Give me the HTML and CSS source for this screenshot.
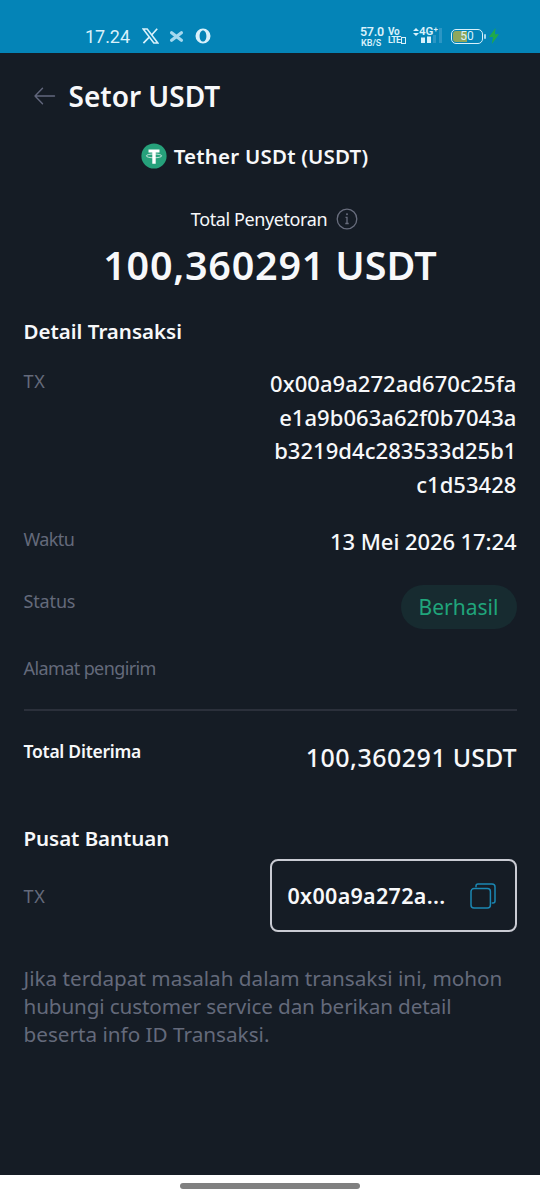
FILE: index.html
```html
<!DOCTYPE html>
<html lang="id">
<head>
<meta charset="utf-8">
<title>Setor USDT</title>
<link rel="stylesheet" href="styles.css">
</head>
<body>
<div class="statusbar">
  <span class="clock">17.24</span>
  <svg class="app-x" width="17" height="16" viewBox="0 0 17 16" fill="none" stroke="#d9f1fb"><path d="M1.2 1h4l10.6 14h-4z" stroke-width="1.6"/><path d="M15.2 .8 9.6 7M7 9.4 1.4 15.2" stroke-width="1.7"/></svg>
  <svg class="app-cross" width="15" height="13" viewBox="0 0 15 13" fill="none" stroke="#a5d8ee" stroke-linecap="round"><path d="M2.600 2.800 12.400 10.200M12.400 2.800 2.600 10.200" stroke-width="3.300"/></svg>
  <svg class="app-o" width="16" height="16" viewBox="0 0 16 16"><path fill="#d9f1fb" fill-rule="evenodd" d="M8 .5a7.500 7.500 0 1 0 0 15 7.500 7.500 0 0 0 0-15zM8 2.400c2 0 3.400 2.400 3.400 5.600S10 13.600 8 13.600 4.600 11.200 4.600 8 6 2.400 8 2.400z"/></svg>
  <div class="speed"><span class="speed-value">57.0</span><span class="speed-unit">KB/S</span></div>
  <div class="volte"><span>Vo</span><span class="lte">LTE<i class="sim"></i></span></div>
  <div class="signal">
    <div class="signal-top"><svg width="6" height="8" viewBox="0 0 6 8" fill="#d9f1fb"><path d="M3 0l3 3H0zM3 8l3-3H0z"/></svg><span>4G<sup>+</sup></span></div>
    <svg class="bars" width="22" height="15" viewBox="0 0 22 15"><path fill="#d9f1fb" d="M0 9.500h4V15H0zM6 8.500h4V15H6z"/><path fill="#2c96c4" d="M12 7h3v8h-3zM18 0h3v15h-3z"/></svg>
  </div>
  <div class="battery"><span>50</span></div>
  <i class="nub"></i>
  <svg class="bolt" width="10" height="16" viewBox="0 0 10 16" fill="#20a94b"><path d="M6.500 0 0 9h4L2.800 16 10 6.300H6z"/></svg>
</div>
<main class="page">
  <header class="header">
    <svg width="22" height="18" viewBox="0 0 22 18" fill="none" stroke="#62677d" stroke-width="1.400" stroke-linecap="round" stroke-linejoin="round"><path d="M20.500 9H1M8.500 1.200 1 9l7.500 7.800"/></svg>
    <h1>Setor USDT</h1>
  </header>
  <div class="token">
    <svg width="26" height="26" viewBox="0 0 26 26"><circle cx="13" cy="13" r="12.600" fill="#26a17b"/><path d="M7.500 6.500h11v3h-3.800v11.200h-3.400V9.500H7.500z" fill="#fff"/><ellipse cx="13" cy="12.900" rx="7.700" ry="1.900" fill="none" stroke="#fff" stroke-width=".7"/></svg>
    <span>Tether USDt (USDT)</span>
  </div>
  <div class="deposit">
    <span>Total Penyetoran</span>
    <svg width="22" height="22" viewBox="0 0 22 22" fill="none" stroke="#686d7d" stroke-width="1.300"><circle cx="11" cy="11" r="9.800"/><path d="M9.500 9.300H11v6M9.300 15.500h3.400"/><circle cx="11" cy="6.300" r=".4"/></svg>
  </div>
  <div class="amount"><span class="digits">100,360291</span> USDT</div>
  <h2 class="section">Detail Transaksi</h2>
  <div class="row row-hash">
    <span class="label label-tx">TX</span>
    <div class="value hash"><span>0x00a9a272ad670c25fa</span><span>e1a9b063a62f0b7043a</span><span>b3219d4c283533d25b1</span><span>c1d53428</span></div>
  </div>
  <div class="row row-time"><span class="label">Waktu</span><span class="value date">13 Mei 2026 17:24</span></div>
  <div class="row row-status"><span class="label label-status">Status</span><span class="pill">Berhasil</span></div>
  <div class="row row-sender"><span class="label">Alamat pengirim</span></div>
  <hr class="divider">
  <div class="row row-total"><span class="total-label">Total Diterima</span><span class="total-value"><span class="digits">100,360291</span> USDT</span></div>
  <h2 class="section section-help">Pusat Bantuan</h2>
  <div class="row row-copy">
    <span class="label label-tx">TX</span>
    <div class="copybox">
      <span>0x00a9a272a...</span>
      <svg width="26" height="26" viewBox="0 0 26 26" fill="none" stroke="#1b87b3" stroke-width="1.500" stroke-linecap="round"><rect x="1" y="5.600" width="19.400" height="19.400" rx="3"/><path d="M6 3.800V3a2 2 0 0 1 2-2h14a3 3 0 0 1 3 3v14a2 2 0 0 1-2 2h-.7"/></svg>
    </div>
  </div>
  <p class="note"><span class="wide">Jika terdapat masalah dalam transaksi ini, mohon</span><br><span class="tight">hubungi customer service dan berikan detail</span><br><span class="wide">beserta info ID Transaksi.</span></p>
</main>
<footer class="navbar"><i class="handle"></i></footer>
</body>
</html>
```
FILE: styles.css
```css
* { box-sizing: border-box; }
body { margin: 0; width: 540px; height: 1199px; overflow: hidden; display: flex; flex-direction: column; background: #151c25; color: #f7f8fa; font-family: "Noto Sans", sans-serif; white-space: nowrap; }
svg { display: block; flex: none; }
h1, h2, p { margin: 0; }
.statusbar { height: 53px; flex: none; padding: 20px 0 0 85px; display: flex; align-items: flex-start; background: #0484b7; color: #d9f1fb; font-family: Roboto, sans-serif; }
.clock { width: 57px; font-size: 18px; line-height: 34px; letter-spacing: -.05px; }
.app-x { margin-top: 8px; }
.app-cross { margin: 10px 0 0 10px; }
.app-o { margin: 8px 0 0 11px; }
.speed { width: 28px; margin: 5px 0 0 149px; display: flex; flex-direction: column; font-weight: 600; }
.speed-value { font-size: 12.500px; line-height: 13px; letter-spacing: -.3px; }
.speed-unit { font-size: 9px; line-height: 10px; padding-left: 1px; }
.volte { width: 25px; margin-top: 7px; display: flex; flex-direction: column; font-size: 10px; line-height: 9px; font-weight: 700; letter-spacing: -.4px; }
.lte { display: flex; align-items: center; font-size: 9px; line-height: 9px; letter-spacing: -.7px; }
.sim { width: 5px; height: 7px; margin-left: 1px; border: 1.500px solid #d9f1fb; }
.signal { position: relative; width: 38px; height: 25px; }
.signal-top { display: flex; align-items: center; margin-top: 7px; font-size: 11.500px; line-height: 9px; font-weight: 600; }
.signal-top sup { font-size: 8px; line-height: 0; vertical-align: 3px; }
.bars { position: absolute; left: 8px; top: 8px; }
.battery { width: 32px; height: 15px; margin-top: 9px; border: 1.500px solid #d9f1fb; border-radius: 5px; font-size: 12px; text-align: center; background: linear-gradient(90deg, #8fa75d 50%, #0484b7 50%) content-box; padding: 1px; }
.battery span { display: block; line-height: 11px; }
.nub { width: 2px; height: 5px; margin: 14px 3px 0 1px; background: #a5d8ee; border-radius: 1px; }
.bolt { margin-top: 8px; }
.page { flex: 1; display: flex; flex-direction: column; padding: 0 23.500px; }
.header { height: 85px; display: flex; align-items: center; padding-left: 10px; gap: 13px; }
.header h1 { font-size: 28px; font-weight: 600; line-height: 40px; }
.token { height: 36px; display: flex; align-items: center; justify-content: center; gap: 7px; padding-right: 31px; font-size: 20.500px; font-weight: 600; letter-spacing: .2px; }
.deposit { height: 32px; margin-top: 29px; display: flex; align-items: center; justify-content: center; gap: 9px; padding-left: 9px; font-size: 18px; letter-spacing: -.4px; }
.amount { height: 50px; margin-top: 6px; line-height: 49px; font-size: 39.500px; font-weight: 600; text-align: center; }
.amount .digits { letter-spacing: .75px; }
.section { margin-top: 25px; font-size: 20.500px; line-height: 30px; font-weight: 600; }
.row { display: flex; justify-content: space-between; align-items: flex-start; }
.label { color: #646a7b; font-size: 18px; line-height: 28px; letter-spacing: -.6px; }
.label-tx { letter-spacing: .8px; }
.value { font-size: 22px; font-weight: 500; line-height: 33.500px; text-align: right; }
.hash { display: flex; flex-direction: column; letter-spacing: .04px; }
.date { letter-spacing: -.08px; }
.row-hash { margin-top: 21px; height: 134px; }
.row-time { margin-top: 24px; height: 34px; }
.row-status { margin-top: 26px; height: 44px; }
.label-status { line-height: 32px; letter-spacing: -.15px; }
.pill { width: 116px; height: 44px; border-radius: 22px; background: #172b30; color: #20a57b; font-size: 21px; line-height: 45px; text-align: center; }
.row-sender { margin-top: 25px; height: 28px; }
.divider { width: 100%; height: 2px; margin: 27px 0 0; border: 0; background: #2b303b; }
.row-total { margin-top: 30px; height: 34px; }
.total-label { font-size: 17.500px; line-height: 20px; font-weight: 600; letter-spacing: -.25px; }
.total-value { font-size: 25px; line-height: 32px; font-weight: 500; }
.total-value .digits { letter-spacing: .5px; }
.section-help { margin-top: 48px; letter-spacing: -.05px; }
.row-copy { margin-top: 6px; height: 73px; align-items: center; }
.copybox { width: 247px; height: 73px; padding: 0 18.500px 0 16px; display: flex; align-items: center; justify-content: space-between; border: 2px solid #c9cbd3; border-radius: 8px; font-size: 21.500px; font-weight: 600; letter-spacing: .3px; }
.note { margin-top: 32px; color: #646a7b; font-size: 20.700px; line-height: 28px; }
.wide { letter-spacing: 0; }
.tight { letter-spacing: -.13px; }
.navbar { height: 24px; flex: none; background: #fff; display: flex; justify-content: center; padding-top: 7.500px; }
.handle { width: 180px; height: 6px; border-radius: 3px; background: #808080; }
```
